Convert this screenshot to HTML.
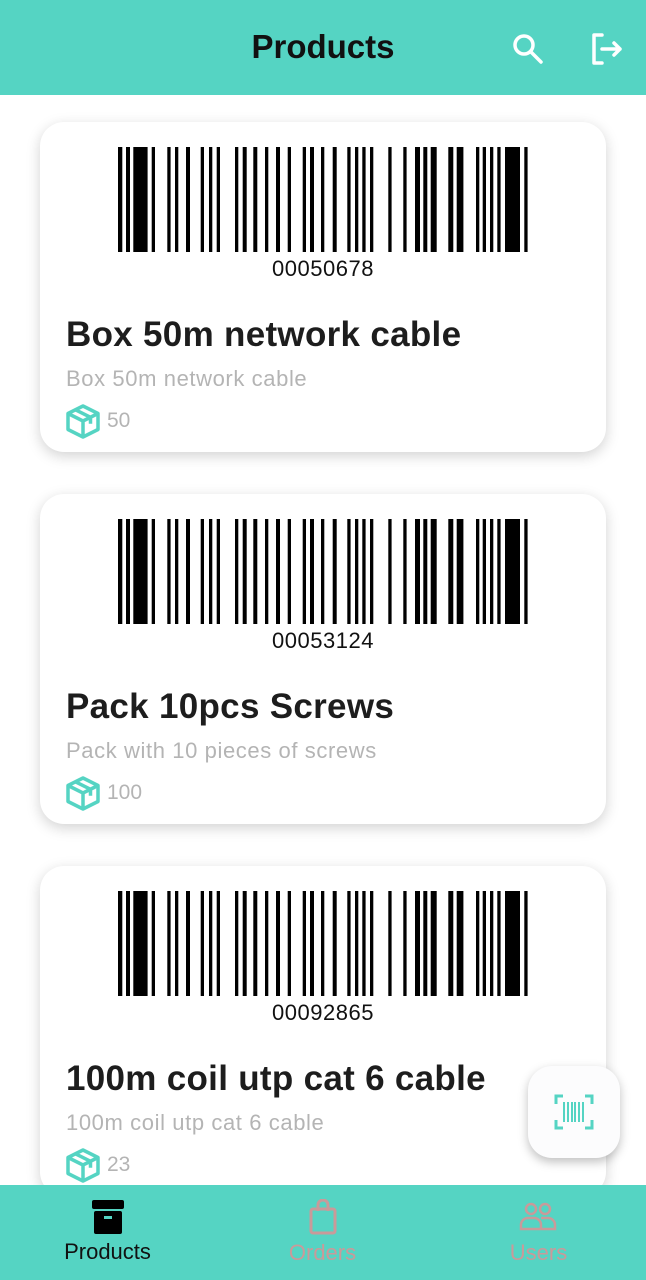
<!DOCTYPE html><html><head><style>
body{margin:0;width:646px;height:1280px;position:relative;overflow:hidden;background:#fff;font-family:"Liberation Sans",Roboto,sans-serif}
.hdr{position:absolute;left:0;top:0;width:646px;height:95px;background:#55d4c3}
.hdr h1{position:absolute;left:0;width:646px;top:28px;margin:0;text-align:center;font-size:33px;font-weight:bold;color:#111}
.card{position:absolute;left:40px;width:566px;height:330px;background:#fff;border-radius:24px;box-shadow:0 4px 14px rgba(0,0,0,.18)}
.card svg.bc{position:absolute;left:70px;top:25px}
.code{position:absolute;top:134px;left:0;width:100%;text-align:center;font-size:22px;color:#111;letter-spacing:.5px}
.t{position:absolute;left:26px;top:193px;font-size:35px;font-weight:bold;color:#1d1d1d;letter-spacing:.3px}
.d{position:absolute;left:26px;top:244px;font-size:22px;color:#b4b4b4;letter-spacing:.6px}
.q{position:absolute;left:26px;top:282px;font-size:21px;color:#b4b4b4}
.q svg{vertical-align:middle;margin-right:6px}
.nav{position:absolute;left:0;top:1185px;width:646px;height:95px;background:#55d4c3}
.ni{position:absolute;top:0;width:215px;text-align:center}
.ni span{position:absolute;top:55px;left:0;width:100%;font-size:22px}
.fab{position:absolute;left:528px;top:1066px;width:92px;height:92px;border-radius:24px;background:#fcfcfd;box-shadow:0 4px 10px rgba(0,0,0,.25)}
</style></head><body>
<div class="hdr"><h1>Products</h1>
<svg style="position:absolute;left:512px;top:33px" width="32" height="32" viewBox="0 0 32 32" fill="none" stroke="#fff" stroke-width="3.5" stroke-linecap="round"><circle cx="12" cy="12" r="9"/><line x1="19" y1="19" x2="29" y2="29"/></svg>
<svg style="position:absolute;left:590px;top:32px" width="34" height="34" viewBox="0 0 34 34" fill="none" stroke="#fff" stroke-width="3.5" stroke-linecap="round" stroke-linejoin="round"><path d="M12 3H4v28h8"/><path d="M12 17h18M24 11l6 6-6 6"/></svg>
</div>
<svg width="0" height="0" style="position:absolute"><defs><g id="bc" fill="#000">
<rect x="8" width="4.3" height="105"/><rect x="16" width="4" height="105"/><rect x="23.3" width="14.3" height="105"/><rect x="41.7" width="3.3" height="105"/><rect x="57.3" width="3.3" height="105"/><rect x="65" width="3.3" height="105"/><rect x="76" width="4" height="105"/><rect x="90.7" width="3.3" height="105"/><rect x="99" width="3.3" height="105"/><rect x="106.7" width="3.3" height="105"/><rect x="125" width="3.3" height="105"/><rect x="132.7" width="4" height="105"/><rect x="143.3" width="4" height="105"/><rect x="155" width="3.3" height="105"/><rect x="166" width="4" height="105"/><rect x="177.7" width="3.3" height="105"/><rect x="192.7" width="3.3" height="105"/><rect x="200" width="4" height="105"/><rect x="211" width="3.3" height="105"/><rect x="222.7" width="4" height="105"/><rect x="237.3" width="3.3" height="105"/><rect x="245" width="3.3" height="105"/><rect x="252.3" width="3.3" height="105"/><rect x="260" width="3.3" height="105"/><rect x="278.3" width="3.3" height="105"/><rect x="293.3" width="3.3" height="105"/><rect x="305" width="5" height="105"/><rect x="313.3" width="4" height="105"/><rect x="320.7" width="6" height="105"/><rect x="338.3" width="5" height="105"/><rect x="346.7" width="6.7" height="105"/><rect x="366" width="3.3" height="105"/><rect x="372.7" width="3.3" height="105"/><rect x="380" width="3.3" height="105"/><rect x="387.3" width="3.3" height="105"/><rect x="395" width="15" height="105"/><rect x="414.3" width="3.3" height="105"/>
</g>
<g id="box" fill="none" stroke="#55d4c3" stroke-width="3.5" stroke-linejoin="round"><path d="M17 2L32 9.5v16L17 33 2 25.5v-16z"/><path d="M2 9.5l15 7.5 15-7.5M17 17v16M9.5 5.8l15 7.5v6.5"/></g></defs></svg>

<div class="card" style="top:122px"><svg class="bc" width="420" height="105"><use href="#bc"/></svg><div class="code">00050678</div><div class="t">Box 50m network cable</div><div class="d">Box 50m network cable</div><div class="q"><svg width="35" height="35"><use href="#box"/></svg>50</div></div>
<div class="card" style="top:494px"><svg class="bc" width="420" height="105"><use href="#bc"/></svg><div class="code">00053124</div><div class="t">Pack 10pcs Screws</div><div class="d">Pack with 10 pieces of screws</div><div class="q"><svg width="35" height="35"><use href="#box"/></svg>100</div></div>
<div class="card" style="top:866px"><svg class="bc" width="420" height="105"><use href="#bc"/></svg><div class="code">00092865</div><div class="t">100m coil utp cat 6 cable</div><div class="d">100m coil utp cat 6 cable</div><div class="q"><svg width="35" height="35"><use href="#box"/></svg>23</div></div>

<div class="fab"><svg style="position:absolute;left:26px;top:28px" width="40" height="36" viewBox="0 0 40 36" fill="none" stroke="#55d4c3" stroke-width="3"><path d="M9 2H2v8M31 2h7v8M9 34H2v-8M31 34h7v-8"/><path d="M10 8v20M14 8v20M18 8v20M21 8v20M25 8v20M29 8v20" stroke-width="2"/></svg></div>

<div class="nav">
<div class="ni" style="left:0"><svg style="position:absolute;left:91px;top:14px" width="34" height="36" viewBox="0 0 34 36"><rect x="1" y="1" width="32" height="9" rx="2" fill="#000"/><rect x="3" y="12" width="28" height="23" rx="2" fill="#000"/><rect x="13" y="17" width="8" height="3" fill="#55d4c3"/></svg><span style="color:#111;top:54px">Products</span></div>
<div class="ni" style="left:215px"><svg style="position:absolute;left:94px;top:14px" width="28" height="36" viewBox="0 0 28 36" fill="none" stroke="#c99a9a" stroke-width="3"><rect x="2" y="10" width="24" height="24" rx="2"/><path d="M9 12V6a5 5 0 0110 0v6"/></svg><span style="color:#c99a9a">Orders</span></div>
<div class="ni" style="left:431px"><svg style="position:absolute;left:88px;top:16px" width="38" height="30" viewBox="0 0 38 30" fill="none" stroke="#c99a9a" stroke-width="2.5"><circle cx="12" cy="8" r="5"/><circle cx="26" cy="8" r="5"/><path d="M2 28v-4a7 7 0 017-7h6a7 7 0 017 7v4zM22 17h7a7 7 0 017 7v4H22"/></svg><span style="color:#c99a9a">Users</span></div>
</div>
</body></html>
